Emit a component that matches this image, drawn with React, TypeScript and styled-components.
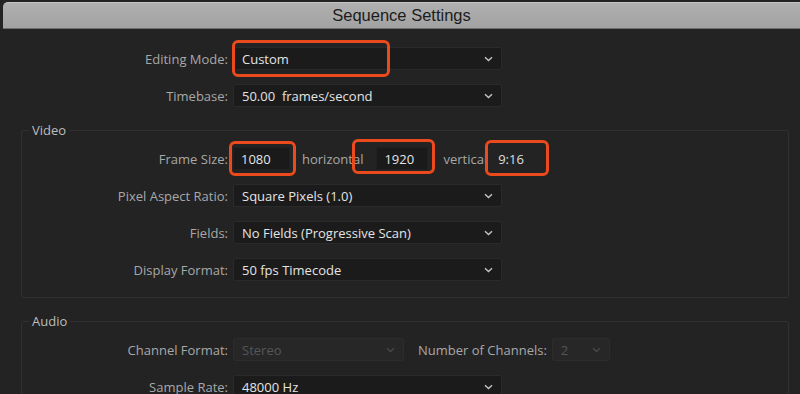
import React, {ReactElement} from 'react'
import styled, {createGlobalStyle} from 'styled-components'

const GlobalStyle = createGlobalStyle`
    html, body {
        margin: 0;
        padding: 0;
        background: #1e1e1e;
    }
    body {
        font-family: 'Open Sans', 'Noto Sans', sans-serif;
    }
`

const Window = styled.div`
    width: 800px;
    height: 394px;
    overflow: hidden;
    background: #232323;
    box-sizing: border-box;
`

const TitleBar = styled.div`
    height: 25px;
    margin: 2px 0 0 3px;
    border-top-left-radius: 5px;
    border-top: 1px solid #c4c4c4;
    border-bottom: 1px solid #6d6d6d;
    background: linear-gradient(#b0b0b0, #a2a2a2);
    display: flex;
    align-items: center;
    justify-content: center;

    > h1 {
        margin: 0;
        font-family: 'Liberation Sans', Arial, sans-serif;
        font-size: 16.5px;
        font-weight: 400;
        color: #1c1c1c;
    }
`

const Body = styled.div`
    display: flex;
    flex-direction: column;
    gap: 14px;
    padding: 18px 11px 0 21px;
`

const Group = styled.fieldset`
    margin: 0;
    padding: 8px 0 16px 0;
    border: 1px solid #313131;
    border-radius: 3px;
    display: flex;
    flex-direction: column;
    gap: 14px;
    min-inline-size: 0;

    > legend {
        margin-left: 7px;
        padding: 0 3px;
        line-height: 18px;
        font-size: 13px;
        color: #bcbcbc;
    }
`

const Row = styled.div`
    position: relative;
    display: flex;
    align-items: center;
    height: 23px;
`

const Label = styled.span<{ $w?: number, $gap?: number }>`
    width: ${({$w}) => $w ? `${$w}px` : 'auto'};
    margin-left: ${({$gap}) => $gap ?? 0}px;
    margin-right: 5px;
    text-align: right;
    font-size: 13px;
    color: #a8a8a8;
    white-space: nowrap;
    flex-shrink: 0;
`

const Text = styled.span<{ $gap: number }>`
    margin-left: ${({$gap}) => $gap}px;
    font-size: 13px;
    color: #a8a8a8;
    white-space: nowrap;
`

const Value = styled.span<{ $gap: number }>`
    margin-left: ${({$gap}) => $gap}px;
    font-size: 13px;
    color: #dedede;
`

const SelectBox = styled.div<{ $w: number, $disabled?: boolean }>`
    box-sizing: border-box;
    width: ${({$w}) => $w}px;
    height: 23px;
    display: flex;
    align-items: center;
    justify-content: space-between;
    padding: 0 8px 0 8px;
    border: 1px solid ${({$disabled}) => $disabled ? '#2c2c2c' : '#2a2a2a'};
    border-radius: 2px;
    background: ${({$disabled}) => $disabled ? '#272727' : '#1b1b1b'};
    font-size: 13px;
    color: ${({$disabled}) => $disabled ? '#565656' : '#e4e4e4'};
    flex-shrink: 0;

    > span {
        white-space: pre;
    }

    > svg {
        stroke: ${({$disabled}) => $disabled ? '#484848' : '#c4c4c4'};
    }
`

const NumberInput = styled.div<{ $w: number, $gap?: number }>`
    box-sizing: border-box;
    width: ${({$w}) => $w}px;
    height: 23px;
    margin-left: ${({$gap}) => $gap ?? 0}px;
    display: flex;
    align-items: center;
    padding-left: 7px;
    background: #1a1a1a;
    border: 1px solid #202020;
    font-size: 13px;
    color: #e4e4e4;
    flex-shrink: 0;
`

const Mark = styled.span<{ $x: number, $y: number, $w: number, $h: number }>`
    position: absolute;
    left: ${({$x}) => $x}px;
    top: ${({$y}) => $y}px;
    width: ${({$w}) => $w}px;
    height: ${({$h}) => $h}px;
    box-sizing: border-box;
    border: 3px solid #ea4a1c;
    border-radius: 6px;
    pointer-events: none;
`

function Chevron(): ReactElement {
    return (
        <svg width="9" height="6" viewBox="0 0 9 6" fill="none" strokeWidth="1.4">
            <path d="M1 1.2 L4.5 4.6 L8 1.2"/>
        </svg>
    )
}

function Select(props: { w: number, value: string, disabled?: boolean }): ReactElement {
    return (
        <SelectBox $w={props.w} $disabled={props.disabled}>
            <span>{props.value}</span>
            <Chevron/>
        </SelectBox>
    )
}

export default function App(): ReactElement {
    return (
        <Window>
            <GlobalStyle/>
            <TitleBar><h1>Sequence Settings</h1></TitleBar>
            <Body>
                <Row>
                    <Label $w={207}>Editing Mode:</Label>
                    <Select w={269} value={'Custom'}/>
                    <Mark $x={211} $y={-7} $w={158} $h={37}/>
                </Row>
                <Row>
                    <Label $w={207}>Timebase:</Label>
                    <Select w={269} value={'50.00  frames/second'}/>
                </Row>

                <Group>
                    <legend>Video</legend>
                    <Row>
                        <Label $w={206}>Frame Size:</Label>
                        <NumberInput $w={57}>1080</NumberInput>
                        <Text $gap={12}>horizontal</Text>
                        <NumberInput $w={52} $gap={13}>1920</NumberInput>
                        <Text $gap={15}>vertical</Text>
                        <Value $gap={11}>9:16</Value>
                        <Mark $x={207} $y={-6} $w={67} $h={35}/>
                        <Mark $x={330} $y={-8} $w={83} $h={35}/>
                        <Mark $x={463} $y={-7} $w={64} $h={36}/>
                    </Row>
                    <Row>
                        <Label $w={206}>Pixel Aspect Ratio:</Label>
                        <Select w={269} value={'Square Pixels (1.0)'}/>
                    </Row>
                    <Row>
                        <Label $w={206}>Fields:</Label>
                        <Select w={269} value={'No Fields (Progressive Scan)'}/>
                    </Row>
                    <Row>
                        <Label $w={206}>Display Format:</Label>
                        <Select w={269} value={'50 fps Timecode'}/>
                    </Row>
                </Group>

                <Group>
                    <legend>Audio</legend>
                    <Row>
                        <Label $w={206}>Channel Format:</Label>
                        <Select w={171} value={'Stereo'} disabled/>
                        <Label $gap={14}>Number of Channels:</Label>
                        <Select w={58} value={'2'} disabled/>
                    </Row>
                    <Row>
                        <Label $w={206}>Sample Rate:</Label>
                        <Select w={269} value={'48000 Hz'}/>
                    </Row>
                </Group>
            </Body>
        </Window>
    )
}
